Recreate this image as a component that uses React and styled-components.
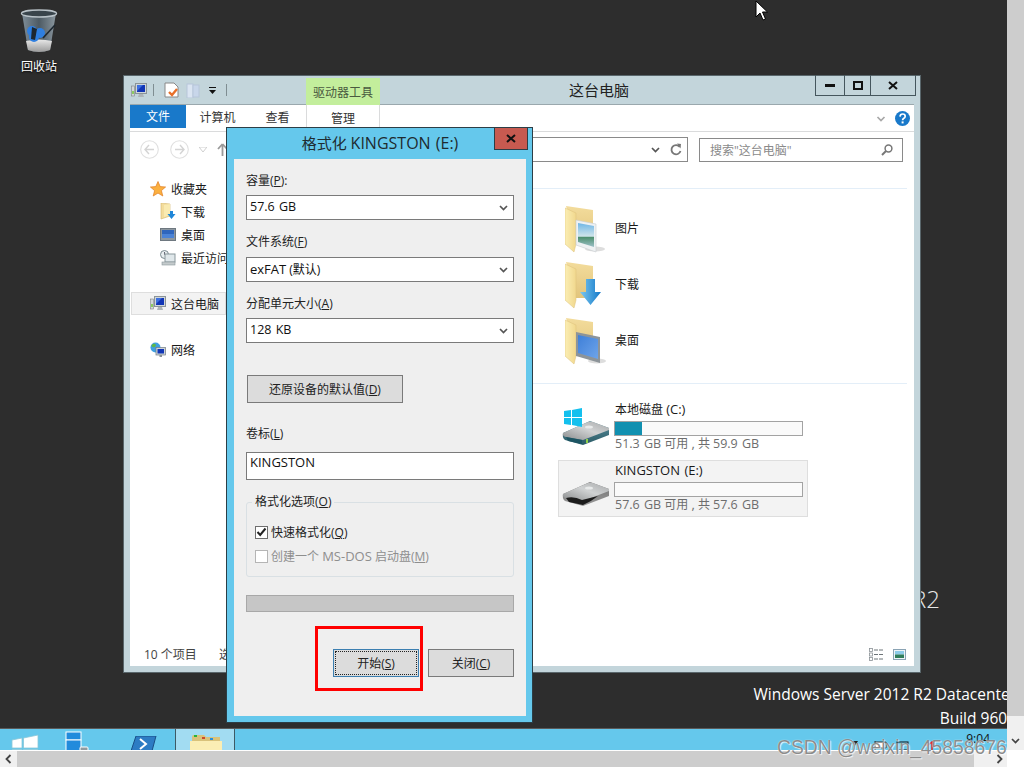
import React from 'react'
import styled, { createGlobalStyle } from 'styled-components'

const UI_FONT = '"Open Sans", "Noto Sans CJK SC", sans-serif'

const Global = createGlobalStyle`
  html, body { margin: 0; padding: 0; overflow: hidden; background: #2d2d2d; }
  body { font-family: ${UI_FONT}; font-size: 12px; color: #1a1a1a; }
  * { box-sizing: border-box; }
`

/////////////
// page frame
const Page = styled.div`
  position: relative;
  width: 1024px;
  height: 768px;
  overflow: hidden;
  display: grid;
  grid-template-columns: 1007px 17px;
  grid-template-rows: 750px 18px;
`
const Screen = styled.div`
  display: flex;
  flex-direction: column;
  overflow: hidden;
`
const Desktop = styled.div`
  position: relative;
  flex: 1;
  background: #2d2d2d;
`
const VScroll = styled.div`
  display: flex;
  flex-direction: column;
  background: #f0f0f0;
`
const VThumb = styled.div`
  height: 716px;
  background: #cdcdcd;
`
const ScrollEnd = styled.div`
  flex: 1;
  display: flex;
  align-items: center;
  justify-content: center;
  padding-top: 16px;
`
const HScroll = styled.div`
  display: flex;
  background: #f0f0f0;
  border-top: 1px solid #fff;
  border-bottom: 1px solid #fff;
`
const HThumb = styled.div`
  width: 957px;
  background: #cdcdcd;
`
const HEnd = styled.div`
  width: ${(props) => props.$w}px;
  display: flex;
  align-items: center;
  justify-content: ${(props) => (props.$right ? 'flex-end' : 'center')};
  padding-right: ${(props) => (props.$right ? '4px' : '0')};
`
const Corner = styled.div`
  background: #fff;
`
const Watermark = styled.div`
  position: absolute;
  left: 777px;
  top: 737px;
  font: 19.3px "Liberation Sans", sans-serif;
  white-space: nowrap;
  color: rgba(120, 120, 120, 0.85);
  text-shadow: 0 0 1px #fff, 1px 1px 1px rgba(255, 255, 255, 0.8);
`

/////////////
// desktop items
const DesktopIcon = styled.div`
  position: absolute;
  left: 12px;
  top: 9px;
  width: 54px;
  display: flex;
  flex-direction: column;
  align-items: center;
  gap: 3px;
  color: #fff;
  text-shadow: 0 1px 2px #000;
`
const BigBrand = styled.div`
  position: absolute;
  right: 67px;
  top: 582px;
  font-size: 24px;
  font-weight: 300;
  line-height: 33px;
  color: #e6e6e6;
  white-space: nowrap;
`
const BuildInfo = styled.div`
  position: absolute;
  right: -9px;
  top: 682px;
  text-align: right;
  color: #fff;
  font-size: 15.5px;
  line-height: 24px;
  white-space: nowrap;
`
const Cursor = styled.svg`
  position: absolute;
  left: 755px;
  top: 0;
`

/////////////
// taskbar
const Taskbar = styled.div`
  height: 22px;
  flex-shrink: 0;
  display: flex;
  overflow: hidden;
  background: #65c8ec;
  border-top: 1px solid #5a5a5a;
`
const TaskSlot = styled.div`
  width: ${(props) => props.$w}px;
  padding-left: ${(props) => props.$pad}px;
  padding-top: ${(props) => props.$top}px;
  background: ${(props) => (props.$active ? '#a2dcf2' : 'transparent')};
  border-left: ${(props) => (props.$active ? '1px solid #3d5a66' : '0')};
  border-right: ${(props) => (props.$active ? '1px solid #3d5a66' : '0')};
  display: flex;
  align-items: flex-start;
`
const Tray = styled.div`
  margin-left: auto;
  padding-right: 17px;
  display: flex;
  align-items: flex-start;
`
const TrayIcon = styled.svg`
  margin-top: 12px;
  margin-right: ${(props) => props.$gap}px;
`
const Clock = styled.div`
  margin-top: 2px;
  line-height: 16px;
  color: #111;
`

/////////////
// explorer window
const Explorer = styled.div`
  position: absolute;
  left: 123px;
  top: 75px;
  width: 798px;
  height: 598px;
  background: #c3d5db;
  border: 1px solid #59666b;
  padding: 0 6px 6px;
  display: flex;
  flex-direction: column;
`
const TitleRow = styled.div`
  height: 28px;
  flex-shrink: 0;
  display: flex;
  align-items: flex-start;
`
const Quick = styled.div`
  width: 176px;
  height: 28px;
  display: flex;
  align-items: center;
  padding-left: 1px;
`
const QuickSep = styled.div`
  width: 1px;
  height: 12px;
  background: #7f8d92;
  margin: 0 ${(props) => props.$r}px 0 ${(props) => props.$l}px;
`
const QuickIcon = styled.svg`
  margin-left: ${(props) => props.$l}px;
`
const ToolTab = styled.div`
  width: 74px;
  height: 27px;
  margin-top: 2px;
  background: #c3ee9c;
  color: #4a5a40;
  display: flex;
  align-items: center;
  justify-content: center;
  position: relative;
  z-index: 1;
`
const WinTitle = styled.div`
  flex: 1;
  text-align: center;
  font-size: 15px;
  line-height: 28px;
  color: #222;
  padding-left: 3px;
`
const WinButtons = styled.div`
  display: flex;
  height: 21px;
  margin-top: -1px;
  border: 1px solid #45565d;
  border-top: 0;
  margin-right: -2px;
`
const WinButton = styled.div`
  width: ${(props) => props.$w}px;
  display: flex;
  align-items: center;
  justify-content: center;
  & + & { border-left: 1px solid #45565d; }
`
const Client = styled.div`
  flex: 1;
  min-height: 0;
  background: #fff;
  border-top: 1px solid #9aa8ad;
  display: flex;
  flex-direction: column;
`
const Ribbon = styled.div`
  height: 27px;
  flex-shrink: 0;
  display: flex;
  align-items: flex-start;
  border-bottom: 1px solid #dadbdc;
`
const RibbonTab = styled.div`
  width: ${(props) => props.$w}px;
  height: ${(props) => (props.$tool ? '26px' : '23px')};
  display: flex;
  align-items: center;
  justify-content: center;
  padding-bottom: ${(props) => (props.$tool ? '1px' : props.$file ? '2px' : '0')};
  padding-top: ${(props) => (props.$plain ? '1px' : '0')};
  background: ${(props) => (props.$file ? '#1979ca' : 'transparent')};
  color: ${(props) => (props.$file ? '#fff' : '#333')};
  border-left: ${(props) => (props.$tool ? '1px solid #dadbdc' : '0')};
  border-right: ${(props) => (props.$tool ? '1px solid #dadbdc' : '0')};
`
const RibbonEnd = styled.div`
  margin-left: auto;
  padding: 6px 4px 0 0;
  display: flex;
  align-items: center;
  gap: 9px;
`
const NavRow = styled.div`
  height: 33px;
  flex-shrink: 0;
  display: flex;
  align-items: center;
  padding: 2px 11px 0 10px;
`
const NavTools = styled.div`
  width: 100px;
  display: flex;
  align-items: center;
`
const NavIcon = styled.svg`
  margin-left: ${(props) => props.$l}px;
  flex-shrink: 0;
`
const AddressBox = styled.div`
  flex: 1;
  height: 25px;
  border: 1px solid #8a8a8a;
  display: flex;
  align-items: center;
  justify-content: flex-end;
  padding-right: 5px;
  gap: 10px;
`
const SearchBox = styled.div`
  width: 204px;
  height: 24px;
  margin-left: 11px;
  border: 1px solid #8a8a8a;
  display: flex;
  align-items: center;
  justify-content: space-between;
  padding: 0 9px 0 10px;
  color: #8a8a8a;
`
const ExplorerBody = styled.div`
  flex: 1;
  min-height: 0;
  display: flex;
`
const Sidebar = styled.div`
  width: 96px;
  flex-shrink: 0;
  padding-top: 12px;
  display: flex;
  flex-direction: column;
`
const NavItem = styled.div`
  height: 23px;
  flex-shrink: 0;
  display: flex;
  align-items: center;
  gap: 5px;
  white-space: nowrap;
  margin-top: ${(props) => props.$top || 0}px;
  margin-left: ${(props) => (props.$selected ? '1px' : '0')};
  padding-left: ${(props) => props.$indent - (props.$selected ? 2 : 0)}px;
  background: ${(props) => (props.$selected ? '#f3f3f3' : 'transparent')};
  border: ${(props) => (props.$selected ? '1px solid #dedede' : '0')};
`
const IconBox = styled.span`
  width: 16px;
  height: 18px;
  display: flex;
  align-items: center;
  justify-content: center;
`
const Content = styled.div`
  flex: 1;
  padding: 23px 7px 0 306px;
  display: flex;
  flex-direction: column;
`
const Rule = styled.div`
  height: 1px;
  flex-shrink: 0;
  background: #e3eef8;
  margin-top: ${(props) => props.$before || 0}px;
  margin-bottom: ${(props) => props.$after}px;
`
const FolderRow = styled.div`
  height: 56px;
  flex-shrink: 0;
  display: flex;
  align-items: center;
  gap: 8px;
  padding-left: 33px;
  span {
    margin-bottom: 2px;
  }
`
const DriveTile = styled.div`
  width: 250px;
  height: 57px;
  flex-shrink: 0;
  margin: 0 0 4px 26px;
  display: flex;
  background: ${(props) => (props.$selected ? '#f3f3f3' : 'transparent')};
  border: 1px solid ${(props) => (props.$selected ? '#dedede' : 'transparent')};
`
const DriveIconBox = styled.div`
  width: 55px;
  flex-shrink: 0;
  padding: 0 0 9px 3px;
  display: flex;
  align-items: flex-end;
`
const DriveText = styled.div`
  width: 189px;
  padding-top: 1px;
`
const DriveName = styled.div`
  line-height: 16px;
  padding-left: 1px;
  color: #1a1a1a;
`
const UsageBar = styled.div`
  height: 15px;
  margin-top: 3px;
  background: #fafafa;
  border: 1px solid #a3a3a3;
`
const UsageFill = styled.div`
  height: 100%;
  background: #1190b0;
`
const DriveFree = styled.div`
  margin-top: -1px;
  padding-left: 1px;
  line-height: 16px;
  color: #6d6d6d;
`
// the latin part of a label runs a little larger than the CJK part
const Latin = styled.span`
  font-size: ${(props) => props.$size || 13}px;
  word-spacing: 1px;
`
const StatusBar = styled.div`
  height: 24px;
  flex-shrink: 0;
  display: flex;
  align-items: center;
  padding: 0 8px 0 14px;
  color: #444;
`
const StatusCount = styled.span`
  width: 75px;
`
const StatusViews = styled.div`
  margin-left: auto;
  display: flex;
  align-items: center;
  gap: 9px;
`

/////////////
// format dialog
const Dialog = styled.div`
  position: absolute;
  left: 226px;
  top: 127px;
  width: 307px;
  height: 596px;
  background: #65c8ec;
  border: 1px solid #2c3e46;
  padding: 0 6px 6px 7px;
  display: flex;
  flex-direction: column;
`
const DialogBar = styled.div`
  height: 31px;
  flex-shrink: 0;
  display: grid;
  grid-template-columns: 1fr auto 1fr;
`
const DialogTitle = styled.div`
  grid-column: 2;
  font-size: 15px;
  line-height: 30px;
  color: #1e2b30;
  white-space: nowrap;
`
const DialogClose = styled.div`
  justify-self: end;
  width: 34px;
  height: 22px;
  margin-right: -2px;
  background: #c75a50;
  border: 1px solid #2c3e46;
  border-top: 0;
  display: flex;
  align-items: center;
  justify-content: center;
`
const DialogPanel = styled.div`
  flex: 1;
  background: #efefef;
  padding: 14px 12px 0;
  display: flex;
  flex-direction: column;
  color: #222;
`
const Key = styled.span`
  text-decoration: underline;
`
const FieldLabel = styled.div`
  height: 16px;
  line-height: 16px;
  flex-shrink: 0;
  margin-top: ${(props) => props.$top || 0}px;
  margin-bottom: ${(props) => props.$after || 0}px;
`
const Select = styled.div`
  height: 25px;
  flex-shrink: 0;
  margin-top: 6px;
  background: #fff;
  border: 1px solid #7a7a7a;
  display: flex;
  align-items: center;
  justify-content: space-between;
  padding: 0 5px 2px 3px;
  color: #111;
  svg {
    margin-top: 2px;
  }
`
const TextInput = styled.div`
  height: 28px;
  flex-shrink: 0;
  margin-top: 10px;
  background: #fff;
  border: 1px solid #7a7a7a;
  padding: 1px 3px 0;
  line-height: 16px;
  color: #111;
`
const Button = styled.div`
  height: 28px;
  width: ${(props) => props.$w}px;
  flex-shrink: 0;
  background: #dcdcdc;
  border: 1px solid ${(props) => (props.$focus ? '#3c7fb1' : '#7a7a7a')};
  outline: ${(props) => (props.$focus ? '1px dotted #222' : '0')};
  outline-offset: -3px;
  display: flex;
  align-items: center;
  justify-content: center;
`
const ButtonText = styled.span`
  white-space: nowrap;
`
const RestoreButton = styled(Button)`
  margin: 32px 0 0 1px;
`
const GroupBox = styled.fieldset`
  margin: 14px 0 0;
  padding: 10px 0 0 8px;
  height: 83px;
  flex-shrink: 0;
  border: 1px solid #d9e0e4;
  border-radius: 3px;
`
const GroupLegend = styled.legend`
  margin-left: -3px;
  padding: 0 3px;
  line-height: 16px;
`
const CheckRow = styled.div`
  height: 24px;
  display: flex;
  align-items: center;
  gap: 3px;
  color: ${(props) => (props.$disabled ? '#8e8e8e' : '#222')};
`
const CheckBox = styled.span`
  width: 13px;
  height: 13px;
  background: #fff;
  border: 1px solid ${(props) => (props.$disabled ? '#b5b5b5' : '#6e6e6e')};
  display: flex;
  align-items: center;
  justify-content: center;
`
const Progress = styled.div`
  height: 17px;
  flex-shrink: 0;
  margin-top: 18px;
  background: #c6c6c6;
  border: 1px solid #a8a8a8;
`
const ButtonRow = styled.div`
  margin-top: 37px;
  display: flex;
  justify-content: flex-end;
  gap: 9px;
`
const StartWrap = styled.div`
  position: relative;
`
const RedMark = styled.div`
  position: absolute;
  left: -18px;
  right: -4px;
  top: -23px;
  bottom: -14px;
  border: 3px solid #ff0000;
`

/////////////
// drawings
const Folder = ({ children }) => (
  <svg width="42" height="47" viewBox="0 0 42 47">
    <defs>
      <linearGradient id="fBack" x1="0" y1="0" x2="0" y2="1">
        <stop offset="0" stopColor="#f3dc9c" />
        <stop offset="1" stopColor="#e2c57c" />
      </linearGradient>
      <linearGradient id="fFront" x1="0" y1="0" x2="1" y2="0">
        <stop offset="0" stopColor="#fbeeb4" />
        <stop offset="1" stopColor="#f1d88e" />
      </linearGradient>
    </defs>
    <path d="M1 0 L28 4 V36 H11 Z" fill="url(#fBack)" />
    <path d="M0 2 L11 7 V38 L9 46 L0 38 Z" fill="url(#fFront)" stroke="#dcc07a" strokeWidth=".5" />
    {children}
  </svg>
)

const PictureFolder = () => (
  <Folder>
    <defs>
      <linearGradient id="fSky" x1="0" y1="0" x2="0" y2="1">
        <stop offset="0" stopColor="#6fb6e6" />
        <stop offset=".55" stopColor="#cfe4ea" />
        <stop offset=".6" stopColor="#4f9070" />
        <stop offset="1" stopColor="#9cc0c8" />
      </linearGradient>
    </defs>
    <ellipse cx="30" cy="43" rx="10" ry="2.5" fill="#ddd" />
    <path d="M11 14 L31 18 V46 L11 39 Z" fill="#eef1f3" stroke="#c8ccd0" strokeWidth=".6" />
    <path d="M13 17 L29 20 V41 L13 36 Z" fill="url(#fSky)" />
  </Folder>
)

const ArrowFolder = () => (
  <Folder>
    <defs>
      <linearGradient id="fArrow" x1="0" y1="0" x2="1" y2="0">
        <stop offset="0" stopColor="#7cc8f0" />
        <stop offset="1" stopColor="#1278c8" />
      </linearGradient>
    </defs>
    <path d="M21 17 H30 V30 H36 L25.5 43 L15 30 H21 Z" fill="url(#fArrow)" />
  </Folder>
)

const DesktopFolder = () => (
  <Folder>
    <defs>
      <linearGradient id="fScreen" x1="0" y1="0" x2="1" y2="1">
        <stop offset="0" stopColor="#3e7fd8" />
        <stop offset="1" stopColor="#6ea4ea" />
      </linearGradient>
    </defs>
    <ellipse cx="32" cy="43" rx="9" ry="2.5" fill="#ddd" />
    <path d="M11 14 L35 19 V45 L11 38 Z" fill="#8d9499" />
    <path d="M13 17 L33 21 V41 L13 35 Z" fill="url(#fScreen)" />
  </Folder>
)

const Drive = ({ system }) => (
  <svg width="48" height="38" viewBox="0 0 48 38">
    <defs>
      <linearGradient id={system ? 'dTopC' : 'dTopE'} x1="0" y1="1" x2="1" y2="0">
        <stop offset="0" stopColor="#8a8c8d" />
        <stop offset=".55" stopColor="#d0d2d3" />
        <stop offset="1" stopColor="#a6a8a9" />
      </linearGradient>
      <linearGradient id={system ? 'dFrontC' : 'dFrontE'} x1="0" y1="0" x2="0" y2="1">
        <stop offset="0" stopColor={system ? '#5a8f9c' : '#707070'} />
        <stop offset="1" stopColor={system ? '#2a5a66' : '#9a9a9a'} />
      </linearGradient>
    </defs>
    <path d="M1 25 L28 13 L47 20 V27 L21 37 L3 32 Q0 30 1 25 Z" fill={`url(#${system ? 'dFrontC' : 'dFrontE'})`} />
    <path d="M1 25 L26 14 Q28 13 31 14 L47 20 L47 22 L21 32 L4 29 Q0 28 1 25 Z" fill={`url(#${system ? 'dTopC' : 'dTopE'})`} />
    <ellipse cx="27" cy="19" rx="4" ry="1.6" fill="#e8eaea" />
    {system ? (
      <>
        <path d="M4 29 L20 32 L20 36 L6 33 Z" fill="#1d5563" />
        <rect x="24" y="31" width="2" height="4" fill="#8fd04a" />
        <g fill="#14c0ee">
          <path d="M2 3 L9 2 V9 H2 Z" />
          <path d="M10 2 L20 0 V9 H10 Z" />
          <path d="M2 10 H9 V17 L2 16 Z" />
          <path d="M10 10 H20 V19 L10 17 Z" />
        </g>
      </>
    ) : (
      <path d="M4 29 Q12 27 20 31 L36 27 Q30 32 21 36 L7 33 Z" fill="#1c1c1c" />
    )}
  </svg>
)

const RecycleBin = () => (
  <svg width="38" height="45" viewBox="0 0 38 45">
    <defs>
      <linearGradient id="rBody" x1="0" y1="0" x2="1" y2="0">
        <stop offset="0" stopColor="#7f8e99" />
        <stop offset=".5" stopColor="#4d5a63" />
        <stop offset="1" stopColor="#8b979f" />
      </linearGradient>
      <linearGradient id="rBase" x1="0" y1="0" x2="0" y2="1">
        <stop offset="0" stopColor="#e8e8e8" />
        <stop offset="1" stopColor="#9a9a9a" />
      </linearGradient>
    </defs>
    <path d="M2 4 L8 41 Q19 45 30 41 L36 4 Z" fill="url(#rBody)" />
    <path d="M6 32 Q19 29 32 32 L30 41 Q19 45 8 41 Z" fill="url(#rBase)" />
    <circle cx="12" cy="22" r="5" fill="#2f7fe0" />
    <circle cx="20" cy="24" r="5" fill="#2f7fe0" />
    <circle cx="14" cy="28" r="5" fill="#2f7fe0" />
    <path d="M12 18 L17 20 L15 31 L11 30 Z" fill="#1d2730" />
    <path d="M23 29 L35 16" stroke="#1d2730" strokeWidth="1.6" />
    <ellipse cx="19" cy="4.5" rx="17.5" ry="3.5" fill="#39444b" stroke="#b9c2c8" strokeWidth="1.4" />
  </svg>
)

const Star = () => (
  <svg width="16" height="16" viewBox="0 0 16 16">
    <path d="M8 .5 L10.2 5.6 L15.6 6 L11.4 9.6 L12.8 15 L8 12.1 L3.2 15 L4.6 9.6 L.4 6 L5.8 5.6 Z" fill="#fbb040" stroke="#e07b20" strokeWidth=".7" />
  </svg>
)

const SmallArrowFolder = () => (
  <svg width="16" height="17" viewBox="0 0 16 17">
    <path d="M1 0 L10 1 V13 L1 16 Z" fill="#f3dc9c" stroke="#d4b76c" strokeWidth=".6" />
    <path d="M4 2 L10 1 V12 L4 14 Z" fill="#f9eab0" />
    <path d="M10 8 H13 V11 H15.5 L11.5 16 L7.5 11 H10 Z" fill="#1f86d8" />
  </svg>
)

const SmallScreen = () => (
  <svg width="16" height="13" viewBox="0 0 16 13">
    <rect x=".5" y=".5" width="15" height="12" fill="#8d979f" stroke="#6e7880" />
    <rect x="2" y="2" width="12" height="8" fill="#2f66bd" />
    <rect x="2" y="6" width="12" height="4" fill="#4b83d6" />
  </svg>
)

const RecentIcon = () => (
  <svg width="16" height="16" viewBox="0 0 16 16">
    <circle cx="4.5" cy="4.5" r="4" fill="#e8eef0" stroke="#7b8a90" />
    <path d="M4.5 2 V4.5 H7" fill="none" stroke="#445" strokeWidth=".8" />
    <rect x="5" y="4" width="10" height="8" fill="#dfe7ea" stroke="#8a979c" />
    <rect x="2" y="12" width="13" height="3" fill="#c4cacc" stroke="#8a979c" strokeWidth=".6" />
  </svg>
)

const PcIcon = () => (
  <svg width="16" height="15" viewBox="0 0 16 15">
    <rect x=".5" y="3" width="3" height="10" fill="#d4d8da" stroke="#7d8488" strokeWidth=".6" />
    <rect x="1.2" y="8" width="1.6" height="3" fill="#7ac943" />
    <rect x="4.5" y=".5" width="11" height="10" fill="#cfd6da" stroke="#8b9498" />
    <rect x="6" y="2" width="8" height="7" fill="#1236b6" />
    <path d="M6 2 H12 L6 8 Z" fill="#3d6fe0" />
    <path d="M8 11 H12 L13 14 H7 Z" fill="#aeb5b9" />
  </svg>
)

const NetIcon = () => (
  <svg width="16" height="16" viewBox="0 0 16 16">
    <circle cx="5.5" cy="5.5" r="5" fill="#3f9fe0" />
    <path d="M2 2.5 Q5 1 6 3 Q5 6 3 5 Q1 5 2 2.5 Z M6 7 L9 8 L7 10.5 Z" fill="#5fb846" />
    <rect x="6" y="5.5" width="9.5" height="7.5" fill="#cdd4d8" stroke="#6f7a80" strokeWidth=".7" />
    <rect x="7.5" y="7" width="6.5" height="4.5" fill="#1236b6" />
    <path d="M9.5 13 H12 V15 H9.5 Z" fill="#889096" />
  </svg>
)

const Chevron = ({ color = '#555', w = 9 }) => (
  <svg width={w} height="6" viewBox="0 0 9 6">
    <path d="M1 1 L4.5 4.5 L8 1" fill="none" stroke={color} strokeWidth="1.7" />
  </svg>
)

const WinLogo = () => (
  <svg width="28" height="22" viewBox="0 0 28 22">
    <path d="M1 6 L11 4 V14 H1 Z M12.5 4 L27 1 V14 H12.5 Z M1 15.5 H11 V22 H1 Z M12.5 15.5 H27 V22 H12.5 Z" fill="#fff" stroke="#8ac7d8" strokeWidth=".8" />
  </svg>
)

const ServerLogo = () => (
  <svg width="24" height="20" viewBox="0 0 24 20">
    <rect x="1" y="1" width="15" height="8" fill="#218bdc" stroke="#fff" />
    <rect x="1" y="9" width="15" height="11" fill="#218bdc" stroke="#fff" />
    <rect x="15" y="16" width="8" height="4" rx="1" fill="#8f9aa0" stroke="#fff" />
  </svg>
)

const ShellLogo = () => (
  <svg width="26" height="15" viewBox="0 0 26 15">
    <path d="M5 0 H25 L21 15 H0 Z" fill="#2d7cc4" stroke="#1a4f86" />
    <path d="M9 3 L15 8 L9 13" fill="none" stroke="#fff" strokeWidth="2" />
  </svg>
)

const FolderLogo = () => (
  <svg width="32" height="17" viewBox="0 0 32 17">
    <path d="M2 3 Q2 1 4 1 H14 L16 3 H30 V17 H2 Z" fill="#d9c27a" />
    <rect x="4" y="1" width="3" height="2" fill="#28b43c" />
    <rect x="12" y="3" width="3" height="2" fill="#cc4a2a" />
    <rect x="20" y="4" width="3" height="2" fill="#2a90dc" />
    <path d="M0 7 H32 V17 H0 Z" fill="#fbeeb4" />
  </svg>
)

const App = () => {
  return (
    <>
      <Global />
      <Page>
        <Screen>
          <Desktop>
            <DesktopIcon>
              <RecycleBin />
              <span>回收站</span>
            </DesktopIcon>
            <BigBrand>Windows Server 2012 R2</BigBrand>
            <BuildInfo>
              Windows Server 2012 R2 Datacenter
              <br />
              Build 9600
            </BuildInfo>

            <Explorer>
              <TitleRow>
                <Quick>
                  <PcIcon />
                  <QuickSep $l={6} $r={10} />
                  <svg width="15" height="16" viewBox="0 0 15 16">
                    <path d="M1 1 H10 L14 5 V15 H1 Z" fill="#fff" stroke="#888" />
                    <path d="M5 10 L8 13 L13 7" fill="none" stroke="#e8702a" strokeWidth="2.4" />
                  </svg>
                  <QuickIcon $l={7} width="15" height="15" viewBox="0 0 15 15">
                    <rect x="1" y="1" width="6" height="14" fill="#dbe5f2" stroke="#b7c6da" />
                    <rect x="7" y="2" width="6" height="12" fill="#c8d6ea" stroke="#b7c6da" />
                  </QuickIcon>
                  <QuickIcon $l={8} width="8" height="7" viewBox="0 0 8 7">
                    <path d="M0 0 H7 V1 H0 Z M0 3 H7 L3.5 7 Z" fill="#111" />
                  </QuickIcon>
                  <QuickSep $l={9} $r={0} />
                </Quick>
                <ToolTab>驱动器工具</ToolTab>
                <WinTitle>这台电脑</WinTitle>
                <WinButtons>
                  <WinButton $w={28}>
                    <svg width="10" height="4" viewBox="0 0 10 4"><rect width="10" height="3" y="1" fill="#111" /></svg>
                  </WinButton>
                  <WinButton $w={26}>
                    <svg width="10" height="9" viewBox="0 0 10 9"><rect x="1" y="1" width="8" height="7" fill="none" stroke="#111" strokeWidth="2" /></svg>
                  </WinButton>
                  <WinButton $w={45}>
                    <svg width="10" height="9" viewBox="0 0 10 9"><path d="M1 1 L9 8 M9 1 L1 8" stroke="#111" strokeWidth="2" /></svg>
                  </WinButton>
                </WinButtons>
              </TitleRow>

              <Client>
                <Ribbon>
                  <RibbonTab $w={56} $file>文件</RibbonTab>
                  <RibbonTab $w={63} $plain>计算机</RibbonTab>
                  <RibbonTab $w={57} $plain>查看</RibbonTab>
                  <RibbonTab $w={74} $tool>管理</RibbonTab>
                  <RibbonEnd>
                    <Chevron color="#a8a8a8" w={10} />
                    <svg width="15" height="15" viewBox="0 0 15 15">
                      <circle cx="7.5" cy="7.5" r="7.5" fill="#1979ca" />
                      <path d="M5 5.6 Q5.2 3 7.6 3 Q10.2 3 10.2 5.2 Q10.2 6.6 8.6 7.4 Q7.6 8 7.6 9.2" fill="none" stroke="#fff" strokeWidth="1.7" />
                      <rect x="6.6" y="10.4" width="2" height="2" fill="#fff" />
                    </svg>
                  </RibbonEnd>
                </Ribbon>

                <NavRow>
                  <NavTools>
                    <NavIcon $l={0} width="19" height="19" viewBox="0 0 19 19">
                      <circle cx="9.5" cy="9.5" r="8.8" fill="#fff" stroke="#e0e0e0" strokeWidth="1.1" />
                      <path d="M9 5 L5 9.5 L9 14 M5.5 9.5 H14" fill="none" stroke="#d4d4d4" strokeWidth="1.4" />
                    </NavIcon>
                    <NavIcon $l={11} width="19" height="19" viewBox="0 0 19 19">
                      <circle cx="9.5" cy="9.5" r="8.8" fill="#fff" stroke="#e0e0e0" strokeWidth="1.1" />
                      <path d="M10 5 L14 9.5 L10 14 M5 9.5 H13.5" fill="none" stroke="#d4d4d4" strokeWidth="1.4" />
                    </NavIcon>
                    <NavIcon $l={10} width="8" height="5" viewBox="0 0 8 5">
                      <path d="M0 0 H8 L4 5 Z" fill="none" stroke="#cfcfcf" />
                    </NavIcon>
                    <NavIcon $l={10} width="11" height="13" viewBox="0 0 11 13">
                      <path d="M5.5 1 L1 6 M5.5 1 L10 6 M5.5 1 V13" fill="none" stroke="#9a9a9a" strokeWidth="1.8" />
                    </NavIcon>
                  </NavTools>
                  <AddressBox>
                    <Chevron />
                    <svg width="12" height="13" viewBox="0 0 12 13">
                      <path d="M9.8 4 A4.6 4.6 0 1 0 10.5 8" fill="none" stroke="#777" strokeWidth="1.8" />
                      <path d="M7 .5 L11 1 L10.5 5.5 Z" fill="#777" />
                    </svg>
                  </AddressBox>
                  <SearchBox>
                    <span>搜索"这台电脑"</span>
                    <svg width="12" height="12" viewBox="0 0 12 12">
                      <circle cx="7.5" cy="4.5" r="3.4" fill="none" stroke="#777" strokeWidth="1.5" />
                      <path d="M5 7 L1 11" stroke="#777" strokeWidth="2" />
                    </svg>
                  </SearchBox>
                </NavRow>

                <ExplorerBody>
                  <Sidebar>
                    <NavItem $indent={20}><IconBox><Star /></IconBox>收藏夹</NavItem>
                    <NavItem $indent={30}><IconBox><SmallArrowFolder /></IconBox>下载</NavItem>
                    <NavItem $indent={30}><IconBox><SmallScreen /></IconBox>桌面</NavItem>
                    <NavItem $indent={30}><IconBox><RecentIcon /></IconBox>最近访问的位置</NavItem>
                    <NavItem $indent={20} $top={23} $selected><IconBox><PcIcon /></IconBox>这台电脑</NavItem>
                    <NavItem $indent={20} $top={23}><IconBox><NetIcon /></IconBox>网络</NavItem>
                  </Sidebar>

                  <Content>
                    <Rule $after={12} />
                    <FolderRow><PictureFolder /><span>图片</span></FolderRow>
                    <FolderRow><ArrowFolder /><span>下载</span></FolderRow>
                    <FolderRow><DesktopFolder /><span>桌面</span></FolderRow>
                    <Rule $before={14} $after={15} />
                    <DriveTile>
                      <DriveIconBox><Drive system /></DriveIconBox>
                      <DriveText>
                        <DriveName>本地磁盘 <Latin>(C:)</Latin></DriveName>
                        <UsageBar><UsageFill style={{ width: `${(8.6 / 59.9) * 100}%` }} /></UsageBar>
                        <DriveFree><Latin $size={12.5}>51.3 GB</Latin> 可用 <Latin>,</Latin> 共 <Latin $size={12.5}>59.9 GB</Latin></DriveFree>
                      </DriveText>
                    </DriveTile>
                    <DriveTile $selected>
                      <DriveIconBox><Drive /></DriveIconBox>
                      <DriveText>
                        <DriveName><Latin>KINGSTON (E:)</Latin></DriveName>
                        <UsageBar />
                        <DriveFree><Latin $size={12.5}>57.6 GB</Latin> 可用 <Latin>,</Latin> 共 <Latin $size={12.5}>57.6 GB</Latin></DriveFree>
                      </DriveText>
                    </DriveTile>
                  </Content>
                </ExplorerBody>

                <StatusBar>
                  <StatusCount>10 个项目</StatusCount>
                  <span>选中 1 个项目</span>
                  <StatusViews>
                    <svg width="15" height="13" viewBox="0 0 15 13">
                      <g fill="#fff" stroke="#8a9196" strokeWidth=".8">
                        <rect x=".5" y=".5" width="3" height="3" />
                        <rect x=".5" y="5" width="3" height="3" />
                        <rect x=".5" y="9.5" width="3" height="3" />
                      </g>
                      <path d="M5 2 H15 M5 6.5 H15 M5 11 H15" stroke="#6d7478" strokeDasharray="4 1" />
                    </svg>
                    <svg width="13" height="11" viewBox="0 0 13 11">
                      <rect x=".5" y=".5" width="12" height="10" fill="#eef4f8" stroke="#8aa3b4" />
                      <rect x="2" y="2" width="9" height="3.5" fill="#8ccbe8" />
                      <rect x="2" y="5.5" width="9" height="3.5" fill="#2f7d5a" />
                    </svg>
                  </StatusViews>
                </StatusBar>
              </Client>
            </Explorer>

            <Dialog>
              <DialogBar>
                <DialogTitle>格式化 <Latin $size={16}>KINGSTON (E:)</Latin></DialogTitle>
                <DialogClose>
                  <svg width="10" height="9" viewBox="0 0 10 9"><path d="M1 1 L9 8 M9 1 L1 8" stroke="#111" strokeWidth="2" /></svg>
                </DialogClose>
              </DialogBar>
              <DialogPanel>
                <FieldLabel>容量(<Key>P</Key>):</FieldLabel>
                <Select><Latin $size={12.5}>57.6 GB</Latin><Chevron /></Select>
                <FieldLabel $top={14} $after={1}>文件系统(<Key>F</Key>)</FieldLabel>
                <Select><span><Latin>exFAT</Latin> (默认)</span><Chevron /></Select>
                <FieldLabel $top={14}>分配单元大小(<Key>A</Key>)</FieldLabel>
                <Select><Latin $size={12.5}>128 KB</Latin><Chevron /></Select>
                <RestoreButton $w={156}><ButtonText>还原设备的默认值(<Key>D</Key>)</ButtonText></RestoreButton>
                <FieldLabel $top={23}>卷标(<Key>L</Key>)</FieldLabel>
                <TextInput><Latin>KINGSTON</Latin></TextInput>
                <GroupBox>
                  <GroupLegend>格式化选项(<Key>O</Key>)</GroupLegend>
                  <CheckRow>
                    <CheckBox>
                      <svg width="11" height="10" viewBox="0 0 11 10">
                        <path d="M1.5 5 L4.2 8 L9.5 1.5" fill="none" stroke="#222" strokeWidth="2" />
                      </svg>
                    </CheckBox>
                    <span>快速格式化(<Key>Q</Key>)</span>
                  </CheckRow>
                  <CheckRow $disabled>
                    <CheckBox $disabled />
                    <span>创建一个 <Latin>MS-DOS</Latin> 启动盘(<Key>M</Key>)</span>
                  </CheckRow>
                </GroupBox>
                <Progress />
                <ButtonRow>
                  <StartWrap>
                    <Button $w={86} $focus><ButtonText>开始(<Key>S</Key>)</ButtonText></Button>
                    <RedMark />
                  </StartWrap>
                  <Button $w={86}><ButtonText>关闭(<Key>C</Key>)</ButtonText></Button>
                </ButtonRow>
              </DialogPanel>
            </Dialog>

            <Cursor width="14" height="22" viewBox="0 0 14 22">
              <path d="M1 1 V17 L5 13 L8 20 L10.5 19 L7.5 12 L12.5 12 Z" fill="#fff" stroke="#000" />
            </Cursor>
          </Desktop>

          <Taskbar>
            <TaskSlot $w={50} $pad={11} $top={5}><WinLogo /></TaskSlot>
            <TaskSlot $w={50} $pad={15} $top={2}><ServerLogo /></TaskSlot>
            <TaskSlot $w={75} $pad={31} $top={7}><ShellLogo /></TaskSlot>
            <TaskSlot $w={60} $pad={14} $top={5} $active><FolderLogo /></TaskSlot>
            <Tray>
              <TrayIcon $gap={16} width="6" height="6" viewBox="0 0 6 6"><path d="M0 0 H6 L3 5 Z" fill="#222" /></TrayIcon>
              <TrayIcon $gap={9} width="13" height="10" viewBox="0 0 13 10"><path d="M1 0 V10 M1 1 H12 V7 H1" fill="#fff" stroke="#333" /></TrayIcon>
              <TrayIcon $gap={16} width="13" height="10" viewBox="0 0 13 10"><rect x="1" y="1" width="11" height="8" fill="none" stroke="#111" /></TrayIcon>
              <TrayIcon $gap={33} width="8" height="10" viewBox="0 0 8 10"><path d="M0 4 H3 L7 1 V9" fill="none" stroke="#d22" strokeWidth="1.5" /></TrayIcon>
              <Clock>9:04</Clock>
            </Tray>
          </Taskbar>
        </Screen>

        <VScroll>
          <VThumb />
          <ScrollEnd><Chevron color="#444" w={9} /></ScrollEnd>
        </VScroll>

        <HScroll>
          <HEnd $w={17}>
            <svg width="7" height="10" viewBox="0 0 7 10"><path d="M5.5 1 L1.5 5 L5.5 9" fill="none" stroke="#444" strokeWidth="1.8" /></svg>
          </HEnd>
          <HThumb />
          <HEnd $w={33} $right>
            <svg width="7" height="10" viewBox="0 0 7 10"><path d="M1.5 1 L5.5 5 L1.5 9" fill="none" stroke="#444" strokeWidth="1.8" /></svg>
          </HEnd>
        </HScroll>
        <Corner />

        <Watermark>CSDN @weixin_45858676</Watermark>
      </Page>
    </>
  )
}

export default App
